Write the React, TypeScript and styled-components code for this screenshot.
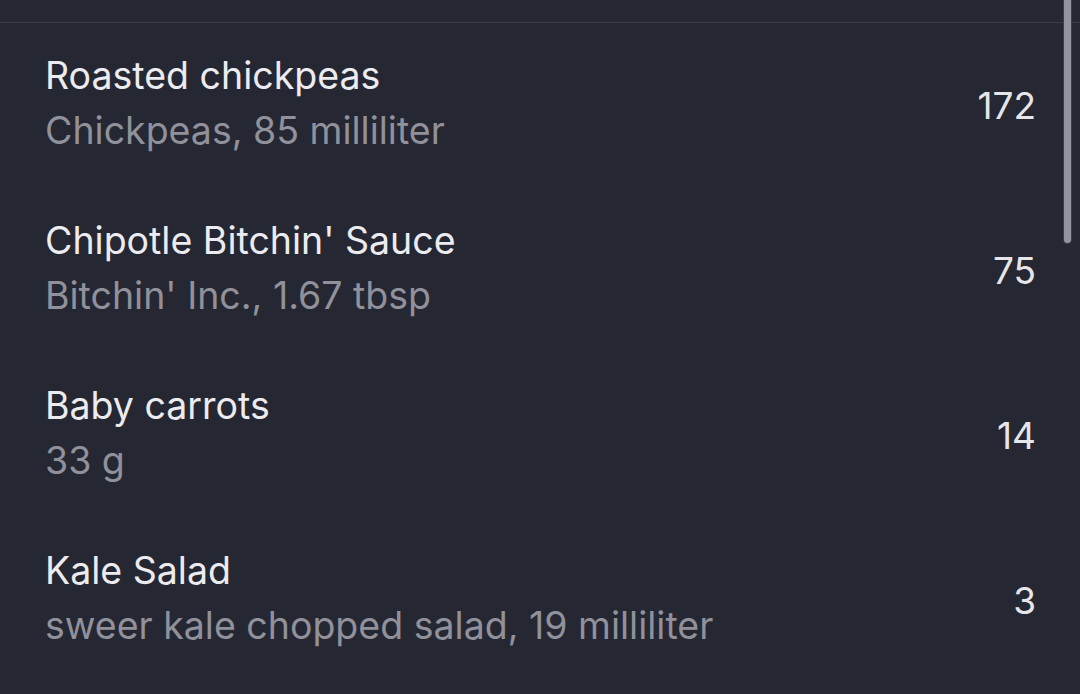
import React from "react";
import styled, { createGlobalStyle } from "styled-components";

const Global = createGlobalStyle`
  html, body { margin: 0; padding: 0; background: #252733; }
  body { font-family: Inter, "Noto Sans", sans-serif; -webkit-font-smoothing: antialiased; }
`;

const Screen = styled.div`
  position: relative;
  width: 1080px;
  height: 694px;
  overflow: hidden;
  background: #252733;
`;

const Header = styled.div`
  height: 22px;
  border-bottom: 1px solid #393b47;
`;

const List = styled.div`
  display: flex;
  flex-direction: column;
`;

const Row = styled.div`
  height: 165px;
  display: flex;
  align-items: center;
  justify-content: space-between;
  padding: 0 44px 0 45px;
`;

const TextCol = styled.div`
  display: flex;
  flex-direction: column;
  padding-bottom: 6px;
`;

const Title = styled.div`
  font-size: 37.5px;
  line-height: 55px;
  color: #ececf0;
`;

const Subtitle = styled.div`
  font-size: 37.5px;
  line-height: 55px;
  color: #90919a;
`;

const Value = styled.div`
  font-size: 37px;
  line-height: 44px;
  color: #e6e6ea;
`;

const ScrollThumb = styled.div`
  position: absolute;
  top: 0;
  right: 9px;
  width: 7px;
  height: 243px;
  border-radius: 0 0 4px 4px;
  background: #93949d;
  box-shadow: 0 0 0 1px #3c3e4a;
`;

const items = [
  { title: "Roasted chickpeas", sub: "Chickpeas, 85 milliliter", value: "172" },
  { title: "Chipotle Bitchin' Sauce", sub: "Bitchin' Inc., 1.67 tbsp", value: "75" },
  { title: "Baby carrots", sub: "33 g", value: "14" },
  { title: "Kale Salad", sub: "sweer kale chopped salad, 19 milliliter", value: "3" },
];

export default function App() {
  return (
    <Screen>
      <Global />
      <Header />
      <List>
        {items.map((it) => (
          <Row key={it.title}>
            <TextCol>
              <Title>{it.title}</Title>
              <Subtitle>{it.sub}</Subtitle>
            </TextCol>
            <Value>{it.value}</Value>
          </Row>
        ))}
      </List>
      <ScrollThumb />
    </Screen>
  );
}
